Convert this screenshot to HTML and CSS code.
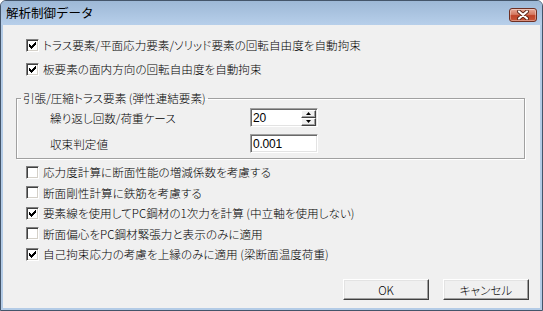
FILE: index.html
```html
<!DOCTYPE html>
<html lang="ja">
<head>
<meta charset="utf-8">
<title>解析制御データ</title>
<link rel="stylesheet" href="styles.css">
</head>
<body>
<div class="window">
  <div class="titlebar">
    <span class="title">解析制御データ</span>
    <span class="close"><svg width="16" height="10" viewBox="0 0 16 10"><path d="M4 1.5 L12 8.5 M12 1.5 L4 8.5" stroke="#5a2418" stroke-width="4" stroke-linecap="round"/><path d="M4 1.5 L12 8.5 M12 1.5 L4 8.5" stroke="#fff" stroke-width="2.2" stroke-linecap="round"/></svg></span>
  </div>
  <div class="client">
    <div class="checks checks-top">
      <div class="check"><span class="box"><svg class="tick" width="11" height="11" viewBox="0 0 11 11"><path d="M2 4h1v3h-1z M3 5h1v3h-1z M4 6h1v3h-1z M5 5h1v3h-1z M6 4h1v3h-1z M7 3h1v3h-1z M8 2h1v3h-1z"/></svg></span><span class="lbl">トラス要素/平面応力要素/ソリッド要素の回転自由度を自動拘束</span></div>
      <div class="check"><span class="box"><svg class="tick" width="11" height="11" viewBox="0 0 11 11"><path d="M2 4h1v3h-1z M3 5h1v3h-1z M4 6h1v3h-1z M5 5h1v3h-1z M6 4h1v3h-1z M7 3h1v3h-1z M8 2h1v3h-1z"/></svg></span><span class="lbl">板要素の面内方向の回転自由度を自動拘束</span></div>
    </div>
    <fieldset class="group">
      <legend>引張/圧縮トラス要素 (弾性連結要素)</legend>
      <div class="fields">
        <span class="flabel">繰り返し回数/荷重ケース</span>
        <div class="input spin-input">
          <span class="val">20</span>
          <div class="spin">
            <span class="sbtn"><svg width="5" height="3" viewBox="0 0 5 3"><path d="M2.5 0 L5 3 L0 3z"/></svg></span>
            <span class="sbtn"><svg width="5" height="3" viewBox="0 0 5 3"><path d="M0 0 L5 0 L2.5 3z"/></svg></span>
          </div>
        </div>
        <span class="flabel">収束判定値</span>
        <div class="input"><span class="val">0.001</span></div>
      </div>
    </fieldset>
    <div class="checks checks-bottom">
      <div class="check"><span class="box"></span><span class="lbl">応力度計算に断面性能の増減係数を考慮する</span></div>
      <div class="check"><span class="box"></span><span class="lbl">断面剛性計算に鉄筋を考慮する</span></div>
      <div class="check"><span class="box"><svg class="tick" width="11" height="11" viewBox="0 0 11 11"><path d="M2 4h1v3h-1z M3 5h1v3h-1z M4 6h1v3h-1z M5 5h1v3h-1z M6 4h1v3h-1z M7 3h1v3h-1z M8 2h1v3h-1z"/></svg></span><span class="lbl">要素線を使用してPC鋼材の1次力を計算 (中立軸を使用しない)</span></div>
      <div class="check"><span class="box"></span><span class="lbl">断面偏心をPC鋼材緊張力と表示のみに適用</span></div>
      <div class="check"><span class="box"><svg class="tick" width="11" height="11" viewBox="0 0 11 11"><path d="M2 4h1v3h-1z M3 5h1v3h-1z M4 6h1v3h-1z M5 5h1v3h-1z M6 4h1v3h-1z M7 3h1v3h-1z M8 2h1v3h-1z"/></svg></span><span class="lbl">自己拘束応力の考慮を上縁のみに適用 (梁断面温度荷重)</span></div>
    </div>
    <div class="buttons">
      <span class="btn">OK</span>
      <span class="btn">キャンセル</span>
    </div>
  </div>
</div>
</body>
</html>
```
FILE: styles.css
```css
* { box-sizing: border-box; }
html, body { margin: 0; padding: 0; background: #ffffff; }
body {
  font-family: "Noto Sans CJK JP", "Noto Sans", sans-serif;
  font-size: 11.6px;
  font-weight: 300;
  color: #000;
  font-feature-settings: "palt";
}
.window {
  width: 543px;
  height: 311px;
  border: 1px solid #44556a;
  border-radius: 6px 6px 0 0;
  background: #b3cbe6;
  display: flex;
  flex-direction: column;
  overflow: hidden;
}
.titlebar {
  height: 24px;
  flex: none;
  display: flex;
  align-items: center;
  padding: 0 5px 0 5px;
  background: linear-gradient(#9db8d6, #b7cfea);
}
.title {
  font-size: 12.5px;
  font-weight: 400;
  line-height: 16px;
  font-feature-settings: normal;
  color: #000;
}
.close {
  margin-left: auto;
  align-self: flex-start;
  margin-top: 7px;
  width: 28px;
  height: 14px;
  border: 1px solid #6e2f22;
  border-radius: 3px;
  background: linear-gradient(#e7a898, #d57a62 45%, #bf4328 55%, #c9573a);
  box-shadow: inset 0 0 0 1px rgba(255,255,255,0.35);
  display: flex;
  align-items: center;
  justify-content: center;
}
.client {
  flex: 1;
  margin: 0 2px 2px;
  background: #f0f0f0;
  display: flex;
  flex-direction: column;
}
.checks { display: flex; flex-direction: column; }
.checks-top { padding: 8px 0 0 23px; }
.checks-top .check { height: 24px; }
.checks-bottom { padding: 0 0 0 23px; margin-top: 3px; }
.checks-bottom .check { height: 20.5px; }
.check {
  display: flex;
  align-items: center;
  gap: 4px;
  line-height: 16px;
}
.box {
  width: 13px;
  height: 13px;
  flex: none;
  background: #fff;
  border-top: 1px solid #808080;
  border-left: 1px solid #808080;
  border-right: 1px solid #ffffff;
  border-bottom: 1px solid #ffffff;
  box-shadow: inset 1px 1px 0 #404040, inset -1px -1px 0 #d4d0c8;
  display: flex;
}
.tick { display: block; fill: #000; shape-rendering: crispEdges; }
.group {
  margin: 10px 15px 0 13px;
  padding: 3px 0 5px 0;
  border: 1px solid #a0a0a0;
  box-shadow: inset 1px 1px 0 #ffffff, 1px 1px 0 #ffffff;
  min-width: 0;
}
.group legend {
  margin-left: 4px;
  padding: 0 2px;
  line-height: 14px;
}
.fields {
  display: grid;
  grid-template-columns: 200px 68px;
  row-gap: 7px;
  margin-left: 33px;
  align-items: center;
}
.flabel { line-height: 16px; }
.input {
  height: 19px;
  width: 68px;
  background: #fff;
  border-top: 1px solid #a0a0a0;
  border-left: 1px solid #a0a0a0;
  border-right: 1px solid #ffffff;
  border-bottom: 1px solid #ffffff;
  box-shadow: inset 1px 1px 0 #696969, inset -1px -1px 0 #e3e3e3;
  display: flex;
  align-items: center;
  padding: 0 1px 0 2px;
}
.val {
  font-family: "Liberation Sans", "Noto Sans", sans-serif;
  font-size: 12px;
  font-weight: 400;
  line-height: 14px;
  letter-spacing: -0.2px;
}
.spin {
  margin-left: auto;
  display: flex;
  flex-direction: column;
  gap: 0;
  padding: 1px 0;
}
.sbtn {
  width: 15px;
  height: 8px;
  background: #f0f0f0;
  border-top: 1px solid #ffffff;
  border-left: 1px solid #ffffff;
  border-right: 1px solid #404040;
  border-bottom: 1px solid #404040;
  box-shadow: inset -1px -1px 0 #a0a0a0;
  display: flex;
  align-items: center;
  justify-content: center;
}
.sbtn svg { display: block; fill: #000; }
.buttons {
  margin-top: auto;
  display: flex;
  justify-content: flex-end;
  gap: 14px;
  padding: 0 11px 8px 0;
}
.btn {
  width: 86px;
  height: 21px;
  background: #f0f0f0;
  border-top: 1px solid #ffffff;
  border-left: 1px solid #ffffff;
  border-right: 1px solid #404040;
  border-bottom: 1px solid #404040;
  box-shadow: inset -1px -1px 0 #a0a0a0, inset 1px 1px 0 #e3e3e3;
  display: flex;
  align-items: center;
  justify-content: center;
  line-height: 16px;
}
```
